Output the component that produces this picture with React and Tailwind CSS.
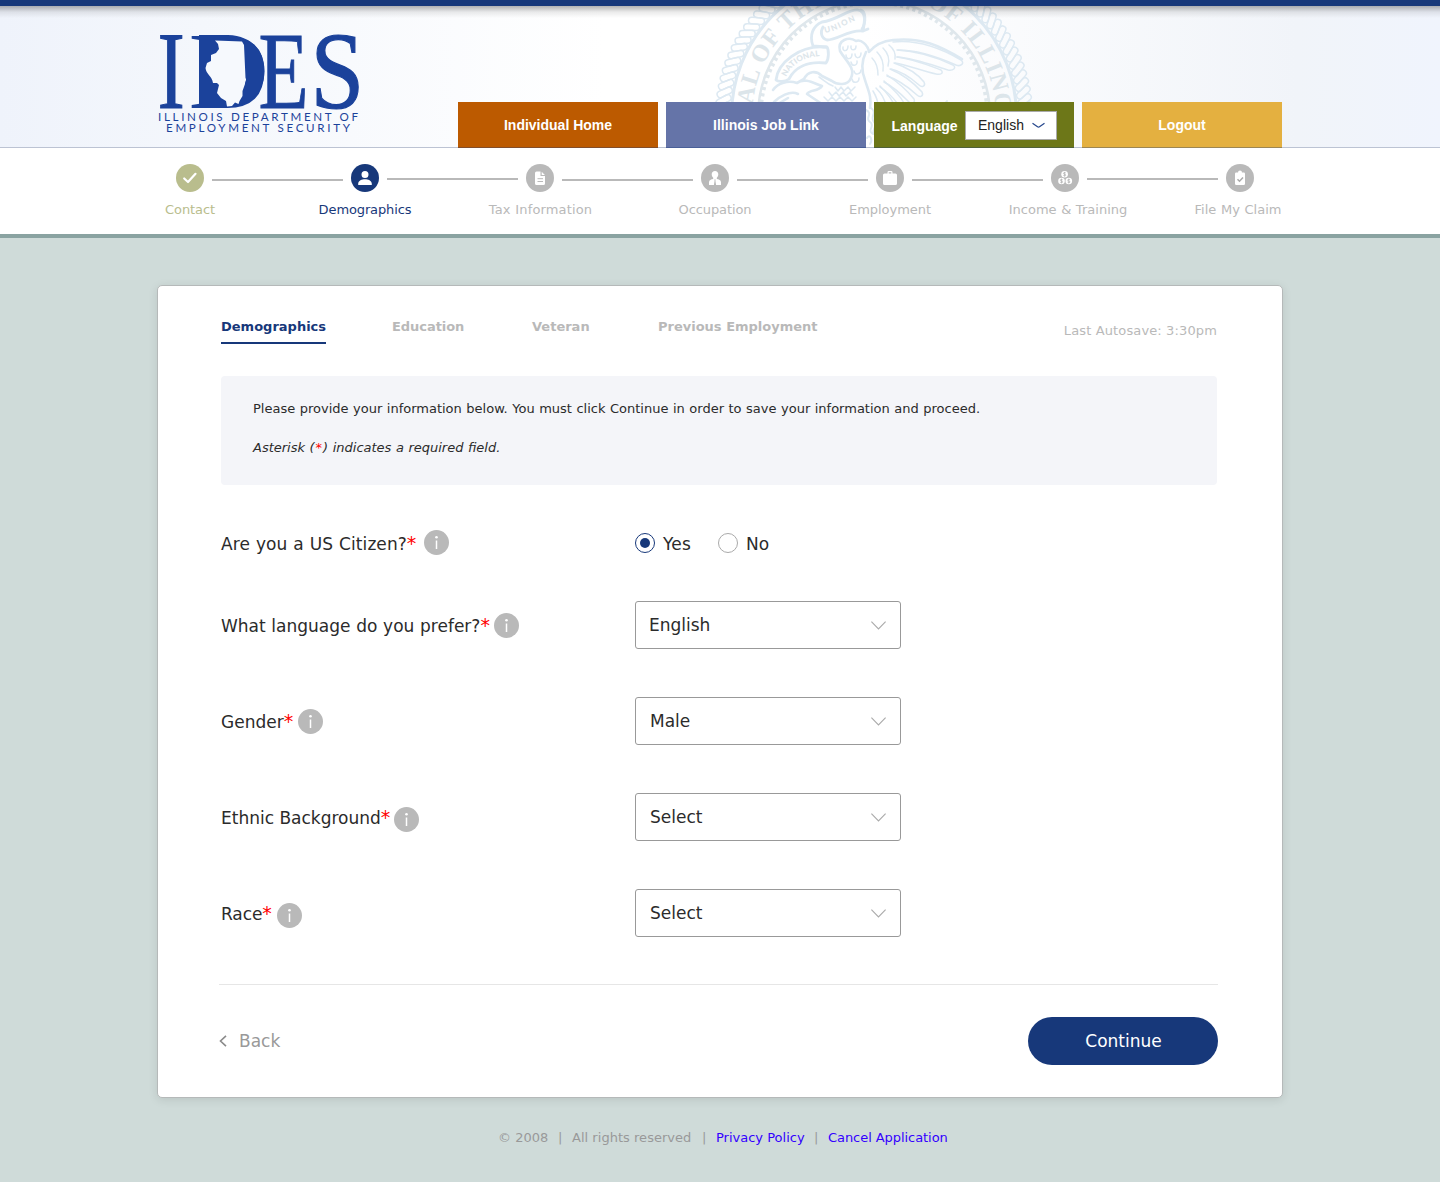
import React from "react";

const rope = Array.from({ length: 120 }, (_, i) => i * 3);

const feathers = [
  "M893 42C920 39 944 50 961 60C965 63 961 67 956 65C938 57 918 50 898 50",
  "M897 50C918 51 938 58 953 65C957 68 953 71 948 70C932 65 914 58 897 57",
  "M897 57C914 59 928 65 941 70C944 73 941 75 936 74C922 71 908 65 895 63",
  "M894 63C906 67 917 73 924 82C926 86 922 88 919 85C910 77 900 71 891 69",
  "M890 69C902 74 914 83 922 92C924 96 920 98 917 95C908 87 897 79 887 76",
  "M887 75C896 81 907 90 914 99C916 103 911 105 908 101C900 93 892 86 884 82",
  "M884 81C892 88 900 95 904 103C904 107 899 106 897 103C892 96 886 91 880 87",
  "M880 86C886 92 892 99 894 105M876 88C882 94 885 100 886 106M873 91C876 96 878 101 878 106",
  "M872 58C876 62 878 68 878 75M877 52C882 57 884 63 883 71M883 48C888 53 890 59 888 66M889 45C894 49 896 53 895 59",
];

function Seal() {
  return (
    <svg
      className="absolute left-[714px] top-0 h-[141px] w-[320px]"
      viewBox="714 6 320 141"
      fill="none"
      stroke="#dde9f2"
      strokeWidth="1.500"
      strokeLinecap="round"
      strokeLinejoin="round"
      aria-hidden="true"
    >
      <defs>
        <path id="sealLeft" d="M757.300 150.500A122 122 0 0 1 866 -5.700" />
        <path id="sealRight" d="M882 -5.700A122 122 0 0 1 990.700 150.500" />
        <path id="sealNat" d="M786 77C792 63 804 57 822 56" />
        <path id="sealUni" d="M825 33C837 31 846 24 857 20" />
      </defs>
      {rope.map((a) => (
        <rect
          key={a}
          x="866"
          y="-38.500"
          width="16"
          height="6.600"
          rx="3.300"
          transform={`rotate(${a} 874 116) rotate(-125 874 -35.200)`}
        />
      ))}
      <circle cx="874" cy="116" r="142.500" strokeWidth="3" />
      <circle cx="874" cy="116" r="114" strokeWidth="5" strokeDasharray="3.200 3.200" stroke="#dfe7ec" strokeLinecap="butt" />
      <circle cx="874" cy="116" r="116" strokeWidth="2.500" stroke="#dfe7ec" />
      <g fill="#dce5ea" stroke="none" fontFamily="Liberation Serif, serif" fontWeight="700" fontSize="24">
        <text>
          <textPath href="#sealLeft" startOffset="15" textLength="166">SEAL OF THE</textPath>
        </text>
        <text>
          <textPath href="#sealRight" startOffset="46" textLength="158">OF ILLINOIS</textPath>
        </text>
      </g>

      <g strokeWidth="2.800">
        <path d="M776 80C778 62 800 46 823 47L827 47C829 50 829 59 826 63C808 61 795 67 789 79C785 82 778 82 776 80Z" />
        <path d="M813 46C809 35 813 26 822 22C838 20 848 9 858 10C866 12 865 20 863 31L868 29M863 31C849 29 838 40 827 40C821 38 820 32 823 27M813 46L826 47" />
        <path d="M861 10C866 11 866 23 862 29" />
      </g>
      <g fill="#dce5ea" stroke="none" fontFamily="Lato, sans-serif" fontWeight="900" fontSize="8">
        <text><textPath href="#sealNat" textLength="42">NATIONAL</textPath></text>
        <text><textPath href="#sealUni" textLength="33">UNION</textPath></text>
      </g>

      <g strokeWidth="2.600">
        <path d="M804 79C808 71 816 70 822 76L832 81C837 85 848 86 851 78C856 68 845 60 840 51C837 40 849 36 856 41C861 39 868 45 869 52C874 46 882 41 893 40C922 37 940 46 962 59" />
        <path d="M773 90C778 83 788 80 797 83C805 77 815 84 822 86C818 92 810 89 807 94L822 104M774 102C779 97 790 90 798 94M804 79L797 83M778 104L788 98" />
        <path d="M866 52C862 60 861 70 865 80C868 90 872 97 870 108" />
      </g>
      <path d="M819 77C824 80 827 84 833 86M843 47C842 52 848 52 848 46M851 46C850 51 856 51 856 46M846 55C846 60 852 60 852 54M855 54C855 59 861 59 861 53M851 62C852 67 858 66 857 61M854 71C855 76 861 74 861 70M852 79C853 84 859 83 859 78M835 87l3 4l3 -4l3 4l4 -4l3 4l4 -4M829 92l3 4l4 -4l3 4l4 -4l3 4l4 -4l3 4M824 97l4 4l4 -4l4 4l4 -4l4 4l4 -4l4 4l4 -4" />
      {feathers.map((d) => (
        <path key={d} d={d} />
      ))}
      <path d="M943 106l4 -5M866 110c8 4 -2 8 4 12s-4 8 3 12M871 108c7 5 -2 9 3 14s-5 8 2 14M867 138c3 -5 6 2 3 6" strokeWidth="2" />
    </svg>
  );
}

function Logo() {
  return (
    <svg className="h-[104px] w-[204px] overflow-visible" viewBox="157 31 204 104" fill="#1b429b" role="img" aria-label="IDES">
      <g fontFamily="Liberation Serif, serif" fontSize="111">
        <text transform="translate(157.600 107.500) scale(.74 1)" stroke="#1b429b" strokeWidth="1">I</text>
        <text x="188.500" y="107.500">D</text>
        <text transform="translate(258.500 107.500) scale(.74 1)" stroke="#1b429b" strokeWidth="1">E</text>
        <text transform="translate(310.500 107.500) scale(.87 1)" stroke="#1b429b" strokeWidth="1.200">S</text>
      </g>
      <path d="M199 35H228C252 36 264.500 51 264.500 71S251 105 228 107.500H199Z" />
      <path
        fill="#f6f9fd"
        d="M215 40.500L242 41.500L244 45L245.500 78C247 80 245 81 245 84L242.500 91L242.500 96L239.500 101L238.500 104L235 102.500L232 106L227 106.500L226 101L221 98L217 93L219 85L217 83L213 83C212 76 206 74 205.500 68L207 63L211 61L211 55L216 53L219 49L218 44Z"
      />
      <g fontFamily="Lato, sans-serif" fontSize="11.600">
        <text x="158" y="121" textLength="200">ILLINOIS DEPARTMENT OF</text>
        <text x="166" y="131.500" textLength="184">EMPLOYMENT SECURITY</text>
      </g>
    </svg>
  );
}

function TopButton({ className, children }) {
  return (
    <button className={`flex h-[46px] w-[200px] items-center justify-center border-b border-[#17387a]/35 text-sm font-bold text-white ${className}`}>
      {children}
    </button>
  );
}

function Header() {
  return (
    <header className="relative h-[148px] border-t-[6px] border-b border-t-[#17387a] border-b-[#bcc3d3] bg-[linear-gradient(90deg,#eff3fb_0%,#f4f7fc_14%,#ffffff_42%,#ffffff_60%,#f1f4f9_90%,#f0f4fd_100%)] font-['Liberation_Sans',sans-serif]">
      <Seal />
      <div className="absolute inset-x-0 top-0 h-3 bg-linear-to-b from-black/30 via-black/8 to-transparent" />
      <div className="relative mx-auto flex h-[142px] w-[1124px] items-end justify-between">
        <div className="-ml-px self-start pt-[25px]">
          <Logo />
        </div>
        <div className="flex gap-2">
          <TopButton className="bg-[#bc5a00]">Individual Home</TopButton>
          <TopButton className="bg-[#6574a8]">Illinois Job Link</TopButton>
          <div className="flex h-[46px] w-[200px] items-center border-b border-[#17387a]/35 bg-[#6d7718] pl-[17.500px] text-sm font-bold text-white">
            <span className="w-[73.500px] pt-[3px]">Language</span>
            <button className="mt-0.5 flex h-[29px] w-[92px] items-center justify-between border border-[#aaa] bg-white pr-[11px] pb-px pl-3 font-normal text-[#222]">
              English
              <svg className="h-[7px] w-[13px]" viewBox="0 0 13 7" fill="none" stroke="#24468c" strokeWidth="1.200">
                <path d="M.5 1.200L5.500 4.700Q6.500 5.400 7.500 4.700L12.500 1.200" />
              </svg>
            </button>
          </div>
          <TopButton className="bg-[#e4b040]">Logout</TopButton>
        </div>
      </div>
    </header>
  );
}

const dollar = "M1.200 -1.100C.6 -2 -1.200 -1.800 -1.200 -.800C-1.200 .300 1.200 -.200 1.200 .900C1.200 1.900 -.7 2 -1.300 1.100M0 -2.300V2.300";

const icons = {
  check: <path d="M8.200 14.500L12 18L19.500 9.800" fill="none" stroke="#fff" strokeWidth="2.200" strokeLinecap="round" strokeLinejoin="round" />,
  person: <path d="M14 7a3.500 3.500 0 1 1 0 7a3.500 3.500 0 1 1 0-7M7.200 21v-1.200C7.200 16.600 11 15.300 14 15.300s6.800 1.300 6.800 4.500V21Z" />,
  doc: (
    <>
      <path d="M10.500 7.500h4v4.500h4.500v7.500a1.500 1.500 0 0 1-1.500 1.500h-7a1.500 1.500 0 0 1-1.500-1.500V9a1.500 1.500 0 0 1 1.500-1.500M15.700 7.700l3.200 3.200h-3.200Z" />
      <path d="M11.500 14.700h5.500M11.500 17.500h5.500" stroke="#b9b9b9" />
    </>
  ),
  worker: (
    <>
      <path d="M14 7c2 0 3.300 1.400 3.300 3.300 0 1.500-.6 2.700-1.500 3.500v1.200c2 .4 4.200 1 4.200 3.200V21H8v-2.800c0-2.200 2.200-2.800 4.200-3.200v-1.200c-.9-.8-1.500-2-1.500-3.500C10.700 8.400 12 7 14 7" />
      <path d="M13.300 15.500h1.400l-.3 1.300.7 4.200h-2.200l.7-4.200Z" fill="#b9b9b9" />
    </>
  ),
  bag: <path d="M11.500 9.500V8.300Q11.500 7 12.800 7h2.400q1.300 0 1.300 1.300v1.200H19.500q1.500 0 1.500 1.500v8.500q0 1.500-1.500 1.500h-11Q7 21 7 19.500V11q0-1.500 1.500-1.500ZM12.700 9.500h2.600V8.300h-2.600Z" fillRule="evenodd" />,
  coins: (
    <>
      <circle cx="13.600" cy="10.200" r="3.300" />
      <circle cx="10.500" cy="17" r="3.300" />
      <circle cx="17.800" cy="17" r="3.300" />
      <g fill="none" stroke="#aeaeae" strokeWidth=".7">
        <path d={dollar} transform="translate(13.600 10.200)" />
        <path d={dollar} transform="translate(10.500 17)" />
        <path d={dollar} transform="translate(17.800 17)" />
      </g>
    </>
  ),
  clipboard: (
    <>
      <path d="M10.200 8.500H12a2 2 0 0 1 4 0h1.800Q19 8.500 19 9.700v10.100Q19 21 17.800 21h-7.600Q9 21 9 19.800V9.700Q9 8.500 10.200 8.500" />
      <path d="M11.500 15.200l2 2l3.500-3.700" fill="none" stroke="#aaa" strokeWidth="1.500" />
    </>
  ),
};

const gray = { disc: "bg-[#b9b9b9]", text: "text-[#b9b9b9]" };
const steps = [
  { label: "Contact", icon: "check", disc: "bg-[#b9bd8d]", text: "text-[#b9bd8d]", line: "mt-[15px]", fit: "tracking-[-0.1px]" },
  { label: "Demographics", icon: "person", disc: "bg-[#17387a]", text: "text-[#17387a]", line: "mt-[14px]", fit: "tracking-[-0.12px]" },
  { label: "Tax Information", icon: "doc", ...gray, line: "mt-[15px]", fit: "tracking-[0.14px] translate-x-[0.5px]" },
  { label: "Occupation", icon: "worker", ...gray, line: "mt-[15px]", fit: "tracking-[-0.1px]" },
  { label: "Employment", icon: "bag", ...gray, line: "mt-[15px]", fit: "tracking-[-0.05px]" },
  { label: "Income & Training", icon: "coins", ...gray, line: "mt-[14px]", fit: "tracking-[0.02px] translate-x-[3px]" },
  { label: "File My Claim", icon: "clipboard", ...gray, line: "", fit: "tracking-[0.02px] -translate-x-[2px]" },
];

function Stepper() {
  return (
    <nav className="h-[90px] border-b-4 border-[#8aa3a1] bg-white pt-4">
      <div className="ml-[176px] flex w-[1078px]">
        {steps.map((s, i) => (
          <React.Fragment key={s.label}>
            <div className="flex w-7 shrink-0 flex-col items-center">
              <div className={`size-7 rounded-full ${s.disc}`}>
                <svg className="size-7" viewBox="0 0 28 28" fill="#fff">
                  {icons[s.icon]}
                </svg>
              </div>
              <span className={`mt-2.5 text-[13px] leading-4 [word-spacing:0.4px] whitespace-nowrap ${s.text} ${s.fit}`}>{s.label}</span>
            </div>
            {i < steps.length - 1 && <div className={`mx-2 h-0.5 flex-1 bg-[#b9b9b9] ${s.line}`} />}
          </React.Fragment>
        ))}
      </div>
    </nav>
  );
}

function InfoIcon({ className }) {
  return (
    <svg className={`size-[25px] shrink-0 ${className}`} viewBox="0 0 25 25">
      <circle cx="12.500" cy="12.500" r="12.500" fill="#b9b9b9" />
      <circle cx="12.500" cy="7.200" r="1.300" fill="#fff" />
      <path d="M12.500 10.500V19" stroke="#fff" strokeWidth="1.500" />
    </svg>
  );
}

function Row({ label, width, iconShift, children }) {
  return (
    <div className="flex h-12 items-center">
      <div className="flex w-[414px] items-center">
        <span className={`pt-0.5 whitespace-nowrap ${width}`}>
          {label}
          <span className="text-[19px] leading-none text-[#f00]">*</span>
        </span>
        <InfoIcon className={iconShift} />
      </div>
      {children}
    </div>
  );
}

function Select({ value, pad = "pl-3.5" }) {
  return (
    <button className={`flex h-12 w-[266px] items-center justify-between rounded-[3px] border border-[#999] pr-3.5 ${pad}`}>
      {value}
      <svg className="h-[9px] w-[15px]" viewBox="0 0 15 9" fill="none" stroke="#aaa" strokeWidth="1.100">
        <path d="M.400 .700L7.500 7.900L14.600 .700" />
      </svg>
    </button>
  );
}

function Citizen() {
  return (
    <div className="flex items-center">
      <span className="flex size-5 items-center justify-center rounded-full border border-[#17387a]">
        <span className="size-2.5 rounded-full bg-[#17387a]" />
      </span>
      <span className="w-[63px] pt-0.5 pl-2 tracking-[0.2px]">Yes</span>
      <span className="size-5 rounded-full border border-[#aaa]" />
      <span className="pt-0.5 pl-2">No</span>
    </div>
  );
}

export default function App() {
  return (
    <div className="h-[1182px] w-[1440px] overflow-hidden bg-[#cfdbd9] font-['DejaVu_Sans',sans-serif]">
      <Header />
      <Stepper />
      <main className="mx-auto mt-[47px] h-[813px] w-[1126px] rounded-[5px] border border-[#b5b9b9] bg-white px-[63px] text-[17px] leading-6 text-[#2b2b2b] shadow-[0_2px_10px_rgba(0,0,0,0.1)]">
        <div className="flex h-[90px] justify-between pt-[33px] text-[13px] leading-4">
          <div className="flex font-bold text-[#b9b9b9]">
            <span className="mr-[65px] h-[25px] w-[105px] border-b-2 border-[#17387a] text-[#17387a]">Demographics</span>
            <span className="w-[141px] pl-px tracking-[-0.05px]">Education</span>
            <span className="w-[126px]">Veteran</span>
            <span>Previous Employment</span>
          </div>
          <span className="pt-1 pr-0.5 tracking-[0.13px] text-[#b9b9b9]">Last Autosave: 3:30pm</span>
        </div>
        <div className="h-[109px] w-[996px] rounded bg-[#f4f5f9] px-8 pt-[25px] text-[13px] leading-4 [word-spacing:0.38px]">
          <p>Please provide your information below. You must click Continue in order to save your information and proceed.</p>
          <p className="mt-[23px] italic">
            Asterisk (<span className="px-px text-[#f00]">*</span>) indicates a required field.
          </p>
        </div>
        <div className="mt-[34px]">
          <Row label="Are you a US Citizen?" width="w-[203px] tracking-[0.07px] [word-spacing:0.5px]" iconShift="-translate-y-px">
            <Citizen />
          </Row>
          <div className="mt-[34px] flex flex-col gap-12">
            <Row label="What language do you prefer?" width="w-[273px] [word-spacing:0.3px]" iconShift="">
              <Select value="English" pad="pl-[13px]" />
            </Row>
            <Row label="Gender" width="w-[77px]" iconShift="">
              <Select value="Male" />
            </Row>
            <Row label="Ethnic Background" width="w-[173px]" iconShift="translate-y-[2px]">
              <Select value="Select" />
            </Row>
            <Row label="Race" width="w-[56px] tracking-[-0.1px]" iconShift="translate-y-[2px]">
              <Select value="Select" />
            </Row>
          </div>
        </div>
        <div className="mt-[47px] mr-px -ml-0.5 flex items-center justify-between border-t border-[#e6e6e6] pt-8">
          <button className="flex items-center text-[#999]">
            <svg className="mr-3 h-3 w-2" viewBox="0 0 8 12" fill="none" stroke="#8a8a8a" strokeWidth="1.600">
              <path d="M7 .800L1.500 6L7 11.200" />
            </svg>
            Back
          </button>
          <button className="h-12 w-[190px] rounded-full bg-[#17387a] pl-px text-white">Continue</button>
        </div>
      </main>
      <footer className="mt-8 flex pl-[498px] text-[13px] leading-4 text-[#999]">
        <span className="w-[60px]">© 2008</span>
        <span className="w-[14px]">|</span>
        <span className="w-[130px] tracking-[0.03px]">All rights reserved</span>
        <span className="w-[14px]">|</span>
        <a className="w-[98px] text-[#3300ff]">Privacy Policy</a>
        <span className="w-[14px]">|</span>
        <a className="tracking-[-0.06px] text-[#3300ff]">Cancel Application</a>
      </footer>
    </div>
  );
}
